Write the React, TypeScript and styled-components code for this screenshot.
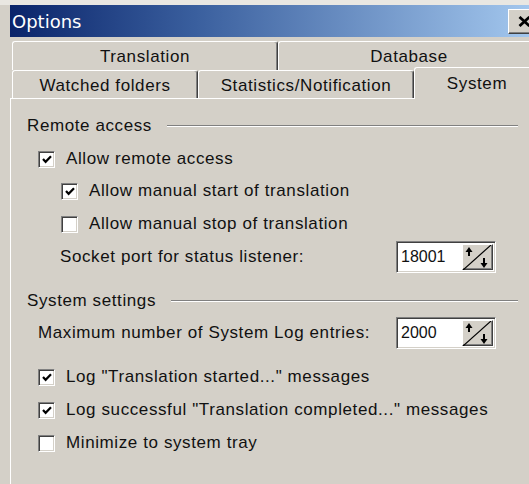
import React from 'react';
import styled, { createGlobalStyle } from 'styled-components';

const face = '#d4d0c8';
const shadow = '#808080';
const darkShadow = '#404040';
const light = '#ffffff';

const GlobalStyle = createGlobalStyle`
  html, body {
    margin: 0;
    padding: 0;
    background: ${face};
    overflow: hidden;
  }
  body {
    font-family: 'Liberation Sans', Arial, sans-serif;
    font-size: 17px;
    letter-spacing: 0.6px;
    color: #111;
  }
`;

const Window = styled.div`
  width: 540px;
  height: 484px;
  box-sizing: border-box;
  border-top: 5px solid #e9e7e2;
  padding-left: 10px;
  overflow: hidden;
`;

const TitleBar = styled.div`
  height: 32px;
  display: flex;
  align-items: center;
  justify-content: space-between;
  background: linear-gradient(to right, #0a246a 0%, #3a5f9e 35%, #a6caf0 100%);
`;

const Title = styled.span`
  font-family: 'DejaVu Sans', Verdana, sans-serif;
  font-size: 18px;
  letter-spacing: 0;
  color: ${light};
  padding-left: 2px;
`;

const CloseButton = styled.div`
  width: 34px;
  height: 25px;
  margin-right: -2px;
  box-sizing: border-box;
  background: ${face};
  border-top: 1px solid ${light};
  border-left: 1px solid ${light};
  border-right: 1px solid ${darkShadow};
  border-bottom: 1px solid ${darkShadow};
  box-shadow: inset -1px -1px 0 ${shadow};
  display: flex;
  align-items: center;
  justify-content: flex-start;
  padding-left: 9px;
`;

const TabStrip = styled.div`
  margin-top: 4px;
`;

const TabRow = styled.div<{ $h: number }>`
  height: ${p => p.$h}px;
  display: flex;
  padding-left: 2px;
`;

const Tab = styled.div<{ $w: number; $selected?: boolean; $pad?: number }>`
  flex: 0 0 ${p => p.$w}px;
  box-sizing: border-box;
  height: ${p => (p.$selected ? 'calc(100% + 4px)' : '100%')};
  margin-top: ${p => (p.$selected ? -3 : 0)}px;
  position: relative;
  z-index: ${p => (p.$selected ? 2 : 1)};
  background: ${face};
  border-top: 1px solid ${light};
  border-left: 1px solid ${light};
  border-right: 1px solid ${darkShadow};
  box-shadow: inset -1px 0 0 ${shadow};
  border-radius: 3px 3px 0 0;
  display: flex;
  align-items: center;
  justify-content: center;
  padding-top: ${p => p.$pad ?? 0}px;
`;

const Panel = styled.div`
  border-top: 1px solid ${light};
  border-left: 1px solid ${light};
  padding: 13px 22px 0 16px;
  display: flex;
  flex-direction: column;
  height: 400px;
`;

const SectionHeader = styled.div<{ $gap?: number }>`
  height: 28px;
  margin-top: ${p => p.$gap ?? 0}px;
  display: flex;
  align-items: center;
  gap: 15px;
`;

const Rule = styled.div`
  flex: 1;
  height: 0;
  border-top: 1px solid ${shadow};
  border-bottom: 1px solid ${light};
`;

const Row = styled.div<{ $indent: number; $gap?: number }>`
  height: 32px;
  margin-top: ${p => p.$gap ?? 0}px;
  padding-left: ${p => p.$indent}px;
  display: flex;
  align-items: center;
`;

const Box = styled.span`
  width: 17px;
  height: 17px;
  box-sizing: border-box;
  flex: 0 0 17px;
  background: ${light};
  border-top: 1px solid ${shadow};
  border-left: 1px solid ${shadow};
  border-right: 1px solid ${light};
  border-bottom: 1px solid ${light};
  box-shadow: inset 1px 1px 0 ${darkShadow}, inset -1px -1px 0 ${face};
  display: flex;
  align-items: center;
  justify-content: center;
  margin-right: 11px;
`;

const SpinField = styled.div`
  margin-left: auto;
  margin-right: 22px;
  width: 100px;
  height: 32px;
  box-sizing: border-box;
  flex: 0 0 100px;
  display: flex;
  border-top: 1px solid ${shadow};
  border-left: 1px solid ${shadow};
  border-right: 1px solid ${light};
  border-bottom: 1px solid ${light};
  box-shadow: inset 1px 1px 0 ${darkShadow}, inset -1px -1px 0 ${face};
  padding: 2px;
  background: ${light};
`;

const SpinValue = styled.div`
  flex: 1;
  display: flex;
  align-items: center;
  padding-left: 2px;
  font-size: 16px;
  letter-spacing: 0;
`;

const SpinButton = styled.div`
  width: 31px;
  box-sizing: border-box;
  background: ${face};
  border-top: 1px solid ${light};
  border-left: 1px solid ${light};
  border-right: 1px solid ${darkShadow};
  border-bottom: 1px solid ${darkShadow};
  box-shadow: inset -1px -1px 0 ${shadow};
  display: flex;
`;

const CheckBox = ({ checked }: { checked: boolean }) => (
  <Box>
    {checked && (
      <svg width="10" height="9" viewBox="0 0 10 9">
        <path d="M1 4 L3.6 6.8 L9 1.2" fill="none" stroke="#000" strokeWidth="2.2" />
      </svg>
    )}
  </Box>
);

const CheckRow = ({ indent, checked, gap, children }: { indent: number; checked: boolean; gap?: number; children: React.ReactNode }) => (
  <Row $indent={indent} $gap={gap}>
    <CheckBox checked={checked} />
    <span>{children}</span>
  </Row>
);

const Spinner = ({ value }: { value: number }) => (
  <SpinField>
    <SpinValue>{value}</SpinValue>
    <SpinButton>
      <svg width="28" height="25" viewBox="0 0 28 25">
        <line x1="0" y1="25" x2="28" y2="0" stroke="#000" strokeWidth="1.2" />
        <path d="M6 2 L2.5 7 L9.5 7 Z" fill="#000" />
        <line x1="6" y1="6" x2="6" y2="11" stroke="#000" strokeWidth="2" />
        <path d="M21 23 L17.5 18 L24.5 18 Z" fill="#000" />
        <line x1="21" y1="13" x2="21" y2="19" stroke="#000" strokeWidth="2" />
      </svg>
    </SpinButton>
  </SpinField>
);

export default function App() {
  return (
    <>
      <GlobalStyle />
      <Window>
        <TitleBar>
          <Title>Options</Title>
          <CloseButton>
            <svg width="13" height="11" viewBox="0 0 13 11">
              <path d="M1.5 1 L11.5 10 M11.5 1 L1.5 10" stroke="#000" strokeWidth="2.8" />
            </svg>
          </CloseButton>
        </TitleBar>

        <TabStrip>
          <TabRow $h={29}>
            <Tab $w={266} $pad={2}>Translation</Tab>
            <Tab $w={262} $pad={2}>Database</Tab>
          </TabRow>
          <TabRow $h={28}>
            <Tab $w={186} $pad={2}>Watched folders</Tab>
            <Tab $w={216} $pad={2}>Statistics/Notification</Tab>
            <Tab $w={126} $selected>System</Tab>
          </TabRow>
        </TabStrip>

        <Panel>
          <SectionHeader>
            <span>Remote access</span>
            <Rule />
          </SectionHeader>
          <CheckRow indent={11} checked gap={3}>Allow remote access</CheckRow>
          <CheckRow indent={34} checked>Allow manual start of translation</CheckRow>
          <CheckRow indent={34} checked={false} gap={1}>Allow manual stop of translation</CheckRow>
          <Row $indent={33} $gap={1}>
            <span>Socket port for status listener:</span>
            <Spinner value={18001} />
          </Row>

          <SectionHeader $gap={14}>
            <span>System settings</span>
            <Rule />
          </SectionHeader>
          <Row $indent={11} $gap={2}>
            <span>Maximum number of System Log entries:</span>
            <Spinner value={2000} />
          </Row>

          <CheckRow indent={11} checked gap={12}>Log "Translation started..." messages</CheckRow>
          <CheckRow indent={11} checked gap={1}>Log successful "Translation completed..." messages</CheckRow>
          <CheckRow indent={11} checked={false} gap={1}>Minimize to system tray</CheckRow>
        </Panel>
      </Window>
    </>
  );
}
